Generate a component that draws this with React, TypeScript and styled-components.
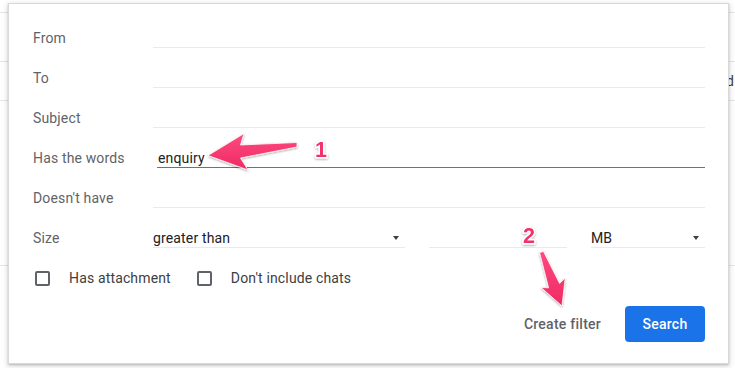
import { FC } from 'react';
import styled, { createGlobalStyle } from 'styled-components';

const GlobalStyle = createGlobalStyle`
    html, body {
        margin: 0;
        padding: 0;
        background: #fff;
        font-family: Roboto, 'Liberation Sans', Arial, sans-serif;
    }
`;

const Page = styled.div`
    position: relative;
    width: 735px;
    height: 368px;
    overflow: hidden;
    background: #fff;
`;

// the mail list peeking out behind the popup
const Backdrop = styled.div`
    display: flex;
    flex-direction: column;
`;

const BackdropRow = styled.div<{ $h: number }>`
    height: ${(p) => p.$h}px;
    border-bottom: 1px solid #e6e6e6;
    box-sizing: border-box;
    padding-left: 726px;
    display: flex;
    align-items: center;
    font-size: 14px;
    color: #3c4043;
    white-space: nowrap;
`;

const Dialog = styled.div`
    position: absolute;
    left: 8px;
    top: 3px;
    width: 721px;
    height: 361px;
    box-sizing: border-box;
    background: #fff;
    border: 1px solid #d9d9d9;
    box-shadow: 0 1px 2px rgba(0, 0, 0, 0.2), 0 2px 6px 1px rgba(0, 0, 0, 0.12);
    padding: 14px 23px 0 24px;
    display: flex;
    flex-direction: column;
    letter-spacing: 0.15px;
`;

const Row = styled.div`
    display: grid;
    grid-template-columns: 120px 1fr;
    align-items: start;
    height: 40px;
`;

const Label = styled.div`
    font-size: 14px;
    line-height: 20px;
    padding-top: 10px;
    color: #5f6368;
`;

const Field = styled.div<{ $focused?: boolean }>`
    margin-top: 10px;
    height: 19px;
    line-height: 20px;
    font-size: 14px;
    color: #202124;
    border-bottom: 1px solid ${(p) => (p.$focused ? '#4a76c9' : '#e8eaed')};
    margin-left: ${(p) => (p.$focused ? '4px' : '0')};
    padding-left: ${(p) => (p.$focused ? '1px' : '0')};
`;

const SizeGrid = styled.div`
    display: grid;
    grid-template-columns: 252px 138px 114px;
    column-gap: 24px;
`;

const Select = styled(Field)`
    display: flex;
    justify-content: space-between;
    align-items: center;
`;

const Caret = styled.span`
    width: 0;
    height: 0;
    border-left: 3.5px solid transparent;
    border-right: 3.5px solid transparent;
    border-top: 4px solid #3c4043;
    margin-right: 6px;
`;

const CheckRow = styled.div`
    display: flex;
    align-items: center;
    height: 40px;
    padding-left: 2px;
`;

const Check = styled.label`
    display: flex;
    align-items: center;
    gap: 19px;
    font-size: 14px;
    color: #3c4043;
    margin-right: 26px;
`;

const Box = styled.span`
    width: 15px;
    height: 15px;
    box-sizing: border-box;
    border: 2px solid #5f6368;
    border-radius: 2px;
`;

const ButtonRow = styled.div`
    display: flex;
    justify-content: flex-end;
    align-items: center;
    gap: 12px;
    margin-top: 8px;
`;

const Button = styled.button<{ $primary?: boolean }>`
    height: 36px;
    border: none;
    border-radius: 4px;
    font-family: Roboto, 'Liberation Sans', Arial, sans-serif;
    font-size: 14px;
    font-weight: 500;
    letter-spacing: 0.25px;
    padding: 0 ${(p) => (p.$primary ? '16px' : '12px')};
    min-width: ${(p) => (p.$primary ? '80px' : '0')};
    background: ${(p) => (p.$primary ? '#1a73e8' : 'transparent')};
    color: ${(p) => (p.$primary ? '#fff' : '#5f6368')};
`;

const Annotations = styled.svg`
    position: absolute;
    left: 0;
    top: 0;
    pointer-events: none;
`;

const fields = ['From', 'To', 'Subject'];

export default function App() {
    return (
        <Page>
            <GlobalStyle />
            <Backdrop>
                <BackdropRow $h={13} />
                <BackdropRow $h={49} />
                <BackdropRow $h={39}>d</BackdropRow>
                <BackdropRow $h={165} />
            </Backdrop>
            <Dialog>
                {fields.map((f) => (
                    <Row key={f}>
                        <Label>{f}</Label>
                        <Field />
                    </Row>
                ))}
                <Row>
                    <Label>Has the words</Label>
                    <Field $focused>enquiry</Field>
                </Row>
                <Row>
                    <Label>Doesn't have</Label>
                    <Field />
                </Row>
                <Row>
                    <Label>Size</Label>
                    <SizeGrid>
                        <Select>
                            greater than <Caret />
                        </Select>
                        <Field />
                        <Select>
                            MB <Caret />
                        </Select>
                    </SizeGrid>
                </Row>
                <CheckRow>
                    <Check>
                        <Box />
                        Has attachment
                    </Check>
                    <Check>
                        <Box />
                        Don't include chats
                    </Check>
                </CheckRow>
                <ButtonRow>
                    <Button>Create filter</Button>
                    <Button $primary>Search</Button>
                </ButtonRow>
            </Dialog>
            <Callouts />
        </Page>
    );
}

const Callouts: FC = () => (
    <Annotations width="735" height="368" viewBox="0 0 735 368">
        <defs>
            <filter id="sh" x="-20%" y="-20%" width="140%" height="140%">
                <feDropShadow dx="0" dy="1" stdDeviation="1" floodColor="#000" floodOpacity="0.35" />
            </filter>
            <linearGradient id="pink" x1="0" y1="0" x2="0" y2="1">
                <stop offset="0" stopColor="#ff4a80" />
                <stop offset="1" stopColor="#ee2a63" />
            </linearGradient>
        </defs>
        <g filter="url(#sh)" fill="url(#pink)" stroke="#fff" strokeWidth="0.8" strokeLinejoin="round">
            <polygon points="208,155.5 244,133.5 240.5,145 297,142.5 297,147 240.5,158 248,170" />
            <polygon points="562,306 541,287.5 548.6,287.8 539.6,252.7 543.4,251.3 559.6,283.4 565.2,278" />
        </g>
        <g
            filter="url(#sh)"
            fill="#f0306c"
            stroke="#fff"
            strokeWidth="3"
            strokeLinejoin="round"
            style={{ paintOrder: 'stroke' }}
            fontFamily="'Liberation Sans', Arial, sans-serif"
            fontWeight="700"
            fontSize="21.5"
        >
            <text x="315" y="157">1</text>
            <text x="523" y="243">2</text>
        </g>
    </Annotations>
);
